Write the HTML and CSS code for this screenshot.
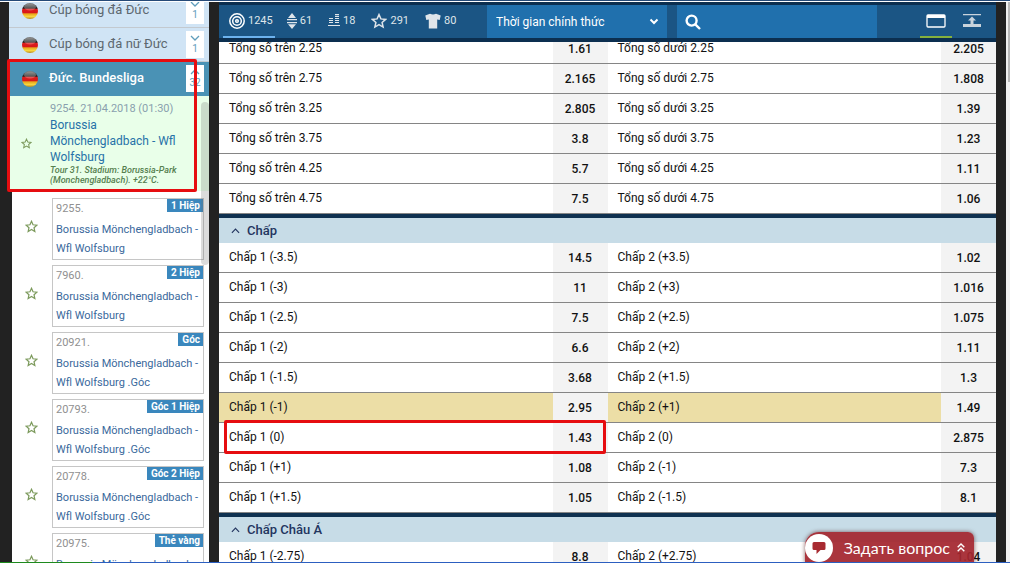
FILE: index.html
```html
<!DOCTYPE html>
<html lang="vi">
<head>
<meta charset="utf-8">
<title>Đức. Bundesliga</title>
<link rel="stylesheet" href="styles.css">
</head>
<body>
<svg class="defs" width="0" height="0" aria-hidden="true">
  <defs>
    <linearGradient id="flag" x1="0" y1="0" x2="0" y2="1">
      <stop offset="0" stop-color="#777"/><stop offset=".3" stop-color="#252525"/><stop offset=".36" stop-color="#6a1512"/>
      <stop offset=".4" stop-color="#dd1c1c"/><stop offset=".6" stop-color="#d81818"/><stop offset=".68" stop-color="#e8a81c"/>
      <stop offset=".85" stop-color="#f8d640"/><stop offset="1" stop-color="#b98a1a"/>
    </linearGradient>
    <symbol id="de" viewBox="0 0 16 16"><circle cx="8" cy="8" r="8" fill="url(#flag)"/><ellipse cx="8" cy="4" rx="6" ry="3.4" fill="#fff" opacity=".25"/></symbol>
    <symbol id="star" viewBox="0 0 16 16"><path d="M8 1.600l1.900 4.300 4.700.5-3.500 3.100 1 4.600L8 11.700l-4.100 2.400 1-4.600L1.400 6.400l4.700-.5z" fill="none" stroke="currentColor" stroke-width="1.500" stroke-linejoin="miter"/></symbol>
    <symbol id="up" viewBox="0 0 10 6"><path d="M1 5l4-4 4 4" fill="none" stroke="currentColor" stroke-width="1.300"/></symbol>
    <symbol id="down" viewBox="0 0 10 6"><path d="M1 1l4 4 4-4" fill="none" stroke="currentColor" stroke-width="1.300"/></symbol>
  </defs>
</svg>
<div class="topline"></div>
<div class="page">
  <aside class="sidebar">
    <div class="league"><svg class="flag"><use href="#de"/></svg><a href="#">Cúp bóng đá Đức</a><button class="toggle"><svg><use href="#down"/></svg>1</button></div>
    <div class="league"><svg class="flag"><use href="#de"/></svg><a href="#">Cúp bóng đá nữ Đức</a><button class="toggle"><svg><use href="#down"/></svg>1</button></div>
    <div class="league open"><svg class="flag"><use href="#de"/></svg><a href="#">Đức. Bundesliga</a><button class="toggle"><svg><use href="#up"/></svg>32</button></div>
    <div class="events">
      <div class="event">
        <button class="fav" aria-label="Yêu thích"><svg><use href="#star"/></svg></button>
        <div class="event-info">
          <div class="date">9254. 21.04.2018 (01:30)</div>
          <a href="#">Borussia Mönchengladbach - Wfl Wolfsburg</a>
          <div class="note">Tour 31. Stadium: Borussia-Park (Monchengladbach). +22°C.</div>
        </div>
      </div>
      <div class="subs">
        <div class="sub"><button class="fav" aria-label="Yêu thích"><svg><use href="#star"/></svg></button><div class="card"><div class="card-top"><span>9255.</span><b>1 Hiệp</b></div><a href="#">Borussia Mönchengladbach - Wfl Wolfsburg</a></div></div>
        <div class="sub"><button class="fav" aria-label="Yêu thích"><svg><use href="#star"/></svg></button><div class="card"><div class="card-top"><span>7960.</span><b>2 Hiệp</b></div><a href="#">Borussia Mönchengladbach - Wfl Wolfsburg</a></div></div>
        <div class="sub"><button class="fav" aria-label="Yêu thích"><svg><use href="#star"/></svg></button><div class="card"><div class="card-top"><span>20921.</span><b>Góc</b></div><a href="#">Borussia Mönchengladbach - Wfl Wolfsburg .Góc</a></div></div>
        <div class="sub"><button class="fav" aria-label="Yêu thích"><svg><use href="#star"/></svg></button><div class="card"><div class="card-top"><span>20793.</span><b>Góc 1 Hiệp</b></div><a href="#">Borussia Mönchengladbach - Wfl Wolfsburg .Góc</a></div></div>
        <div class="sub"><button class="fav" aria-label="Yêu thích"><svg><use href="#star"/></svg></button><div class="card"><div class="card-top"><span>20778.</span><b>Góc 2 Hiệp</b></div><a href="#">Borussia Mönchengladbach - Wfl Wolfsburg .Góc</a></div></div>
        <div class="sub"><button class="fav" aria-label="Yêu thích"><svg><use href="#star"/></svg></button><div class="card"><div class="card-top"><span>20975.</span><b>Thẻ vàng</b></div><a href="#">Borussia Mönchengladbach - Wfl Wolfsburg</a></div></div>
      </div>
      <div class="side-thumb"></div>
    </div>
  </aside>

  <main class="main">
    <header class="bar">
      <nav class="tabs">
        <button class="tab active"><svg width="16" height="16" viewBox="0 0 16 16" fill="none" stroke="#fff" stroke-width="1.500"><circle cx="8" cy="8" r="7.200"/><circle cx="8" cy="8" r="4.300"/><circle cx="8" cy="8" r="1.300"/></svg>1245</button>
        <button class="tab"><svg width="10" height="16" viewBox="0 0 10 16" fill="#dfe5ea"><path d="M5 0l4 5H1zM0 6h10v1.300H0zM0 9h10v1.300H0zM1 11.300h8l-4 4.700z"/></svg>61</button>
        <button class="tab"><svg width="12" height="13" viewBox="0 0 12 13" stroke="#dfe5ea" stroke-width="1.200"><path d="M1 4.500h4M1 6.500h4M1 8.500h4M7 .6h4M7 2.500h4M7 4.500h4M7 6.500h4M7 8.500h4M0 11.500h12"/></svg>18</button>
        <button class="tab"><svg width="16" height="16"><use href="#star"/></svg>291</button>
        <button class="tab"><svg width="16" height="16" viewBox="0 0 16 16" fill="#dfe5ea"><path d="M5 .8q3 1.400 6 0l4.700 1.700-1 4.500-2.500-.5v9H3.800v-9L1.300 7l-1-4.500z"/></svg>80</button>
      </nav>
      <div class="period"><select aria-label="Thời gian"><option>Thời gian chính thức</option></select><svg width="10" height="7" viewBox="0 0 10 7"><path d="M1.500 1.500L5 5l3.500-3.500" fill="none" stroke="#fff" stroke-width="2"/></svg></div>
      <label class="search"><svg width="16" height="16" viewBox="0 0 16 16" fill="none" stroke="#fff" stroke-width="2.400"><circle cx="6.600" cy="6.600" r="5"/><path d="M10.300 10.300l4.700 4.700"/></svg><input type="search" aria-label="Tìm kiếm"></label>
      <div class="views">
        <button class="view active" aria-label="Cửa sổ"><svg width="20" height="14" viewBox="0 0 20 14"><rect x="1" y="1" width="18" height="12" rx="1" fill="none" stroke="#fff" stroke-width="1.300"/><path d="M1 2.500h18" stroke="#fff" stroke-width="3"/></svg></button>
        <button class="view" aria-label="Lên đầu"><svg width="18" height="14" viewBox="0 0 18 14" fill="#c9d3dc"><path d="M0 0h18v1.300H0zM9 2.500l4 4h-2.500V10H18v3H0v-3h7.500V6.500H5z"/></svg></button>
      </div>
    </header>

    <div class="markets">
      <section class="market cut">
        <table>
          <tr><th>Tổng số trên 2.25</th><td>1.61</td><th>Tổng số dưới 2.25</th><td>2.205</td></tr>
          <tr><th>Tổng số trên 2.75</th><td>2.165</td><th>Tổng số dưới 2.75</th><td>1.808</td></tr>
          <tr><th>Tổng số trên 3.25</th><td>2.805</td><th>Tổng số dưới 3.25</th><td>1.39</td></tr>
          <tr><th>Tổng số trên 3.75</th><td>3.8</td><th>Tổng số dưới 3.75</th><td>1.23</td></tr>
          <tr><th>Tổng số trên 4.25</th><td>5.7</td><th>Tổng số dưới 4.25</th><td>1.11</td></tr>
          <tr><th>Tổng số trên 4.75</th><td>7.5</td><th>Tổng số dưới 4.75</th><td>1.06</td></tr>
        </table>
      </section>
      <section class="market">
        <button class="heading"><svg><use href="#up"/></svg>Chấp</button>
        <table>
          <tr><th>Chấp 1 (-3.5)</th><td>14.5</td><th>Chấp 2 (+3.5)</th><td>1.02</td></tr>
          <tr><th>Chấp 1 (-3)</th><td>11</td><th>Chấp 2 (+3)</th><td>1.016</td></tr>
          <tr><th>Chấp 1 (-2.5)</th><td>7.5</td><th>Chấp 2 (+2.5)</th><td>1.075</td></tr>
          <tr><th>Chấp 1 (-2)</th><td>6.6</td><th>Chấp 2 (+2)</th><td>1.11</td></tr>
          <tr><th>Chấp 1 (-1.5)</th><td>3.68</td><th>Chấp 2 (+1.5)</th><td>1.3</td></tr>
          <tr class="hover"><th>Chấp 1 (-1)</th><td>2.95</td><th>Chấp 2 (+1)</th><td>1.49</td></tr>
          <tr><th>Chấp 1 (0)</th><td>1.43</td><th>Chấp 2 (0)</th><td>2.875</td></tr>
          <tr><th>Chấp 1 (+1)</th><td>1.08</td><th>Chấp 2 (-1)</th><td>7.3</td></tr>
          <tr><th>Chấp 1 (+1.5)</th><td>1.05</td><th>Chấp 2 (-1.5)</th><td>8.1</td></tr>
        </table>
      </section>
      <section class="market">
        <button class="heading"><svg><use href="#up"/></svg>Chấp Châu Á</button>
        <table>
          <tr><th>Chấp 1 (-2.75)</th><td>8.8</td><th>Chấp 2 (+2.75)</th><td>1.04</td></tr>
        </table>
      </section>
    </div>
  </main>
</div>
<div class="scroll"><div class="scroll-thumb"></div></div>
<button class="chat"><span class="bubble"><svg width="14" height="14" viewBox="0 0 14 14" fill="#a82a31"><path d="M2 1h10q1.500 0 1.500 1.500v5Q13.500 9 12 9H8.500l-4 4V9H2Q.500 9 .500 7.500v-5Q.500 1 2 1z"/></svg></span>Задать вопрос<svg width="8" height="9" viewBox="0 0 8 9" fill="none" stroke="#fff" stroke-width="1.400"><path d="M.700 4.300L4 1l3.300 3.300M.700 8.300L4 5l3.300 3.300"/></svg></button>
<div class="mark mark-event"></div>
<div class="mark mark-odd"></div>
<div class="bottomline"></div>
</body>
</html>
```
FILE: styles.css
```css
* { box-sizing: border-box; }
body {
  margin: 0;
  height: 100vh;
  overflow: hidden;
  display: flex;
  flex-direction: column;
  background: #222;
  font-family: Roboto, "Noto Sans", sans-serif;
  font-size: 12px;
  color: #111;
}
button, select, input { font: inherit; color: inherit; border: 0; padding: 0; margin: 0; background: none; }
a { text-decoration: none; color: inherit; }
svg { flex: none; }
.defs { position: absolute; }
.topline { flex: none; height: 2px; background: #254a78; border-bottom: 1px solid #fff; }
.page { flex: 1; min-height: 0; display: flex; gap: 10px; padding: 0 14px 0 9px; overflow: hidden; }

/* Sidebar */
.sidebar { width: 200px; flex: none; overflow: hidden; }
.league {
  height: 34px;
  display: flex;
  align-items: center;
  gap: 11px;
  padding: 0 5px 0 13px;
  border-bottom: 1px solid #c3c9cf;
  background: #d0e4f5;
  color: #5d6870;
  font-size: 13px;
}
.league:first-child { margin-top: -8px; }
.league a { flex: 1; padding-bottom: 2px; }
.league.open { background: #4a92b5; color: #fff; border-bottom-color: #4a92b5; font-weight: 500; }
.flag { width: 16px; height: 16px; }
.toggle {
  width: 18px;
  height: 27px;
  background: #fff;
  color: #5f9dbb;
  font-size: 10px;
  line-height: 12px;
  font-weight: 400;
  display: flex;
  flex-direction: column;
  align-items: center;
  justify-content: center;
  gap: 2px;
}
.toggle svg { width: 10px; height: 6px; }
.events { position: relative; }
.event { display: flex; background: #e9ffe9; padding: 5px 24px 6px 12px; }
.fav { color: #7c9a5c; flex: none; display: flex; align-items: center; }
.event .fav { width: 29px; }
.event .fav svg { width: 11px; height: 11px; }
.event-info { line-height: 16px; }
.date { color: #8a9fae; font-size: 11px; }
.event-info a { display: block; color: #2672a8; }
.note { color: #55804f; font-size: 9px; line-height: 10px; font-weight: 500; font-style: italic; }
.subs { background: #fff; margin-left: 3px; padding: 7px 5px 0 0; }
.sub { display: flex; margin-bottom: 5px; }
.sub .fav { width: 40px; padding-left: 13px; padding-bottom: 6px; }
.sub .fav svg { width: 13px; height: 13px; }
.card { flex: 1; height: 62px; border: 1px solid #c6c6c6; padding: 0 0 0 3px; color: #3a699c; font-size: 11px; line-height: 19px; }
.card a { display: block; }
.card-top { display: flex; justify-content: space-between; align-items: flex-start; height: 21px; color: #909090; }
.card-top b { background: #3a87bd; color: #fff; font-size: 10px; line-height: 13px; padding: 0 3px 0 4px; }
.side-thumb { position: absolute; top: 6px; right: 0; width: 8px; height: 163px; border-radius: 4px; background: rgba(110, 110, 110, .25); }

/* Top bar */
.main { flex: 1; min-width: 0; background: #0f3150; overflow: hidden; display: flex; flex-direction: column; }
.bar { flex: none; position: relative; z-index: 1; display: flex; height: 40px; border: solid #0c2f50; border-width: 3px 0 4px; background: #1b5584; }
.tabs { width: 268px; flex: none; display: flex; gap: 8px; padding-left: 4px; }
.tab { display: flex; align-items: center; gap: 3px; padding: 0 4px; color: #dfe5ea; font-size: 11px; border-bottom: 2px solid transparent; }
.tab.active { padding: 0 2px 0 6px; border-bottom-color: #6cb2ee; }
.period { width: 180px; flex: none; margin-right: 10px; display: flex; align-items: center; padding-right: 8px; background: #2070ad; color: #fff; }
.period select { flex: 1; min-width: 0; height: 31px; appearance: none; padding-left: 9px; }
.search { flex: 0 1 200px; min-width: 0; display: flex; align-items: center; padding-left: 8px; background: #2070ad; color: #fff; }
.search input { flex: 1; min-width: 0; outline: 0; }
.views { margin-left: auto; display: flex; gap: 4px; padding-right: 8px; }
.view { width: 32px; display: flex; align-items: center; justify-content: center; border-bottom: 2px solid transparent; }
.view.active { border-bottom-color: #85b13d; }

/* Markets */
.market { margin-bottom: 4px; }
.market.cut { margin-top: -8px; }
.heading { width: 100%; height: 25px; display: flex; align-items: center; gap: 7px; padding-left: 12px; background: #c7dce7; color: #23355f; font-size: 13px; font-weight: 500; }
.heading svg { width: 9px; height: 6px; }
table { width: 100%; table-layout: fixed; border-collapse: separate; border-spacing: 0; background: #fff; }
th, td { height: 30px; border-bottom: 1px solid #858585; }
th { text-align: left; font-weight: 400; padding: 0 10px 2px; }
td { width: 55px; padding: 1px 0 0; text-align: center; font-weight: 500; background: #f3f3f3; }
.hover th { background: #ecdea6; }

/* Overlays */
.scroll { position: absolute; top: 2px; right: 0; bottom: 0; width: 4px; padding-left: 2px; background: #f1f1f1; }
.scroll-thumb { height: 80px; background: #b9b9b9; }
.chat {
  position: absolute;
  right: 36px;
  bottom: 0;
  height: 31px;
  display: flex;
  align-items: center;
  gap: 7px;
  padding-right: 9px;
  border-radius: 14px 6px 0 0;
  background: rgba(164, 38, 46, .93);
  box-shadow: 0 0 4px rgba(60, 0, 0, .6);
  color: #fff;
  font: 16px Lato, sans-serif;
}
.bubble { width: 28px; height: 28px; margin-right: 4px; border-radius: 50%; background: #fff; display: flex; align-items: center; justify-content: center; }
.mark { position: absolute; border: 3px solid #e60d10; border-radius: 2px; }
.mark-event { left: 7px; top: 59px; width: 190px; height: 133px; }
.mark-odd { left: 224px; top: 420px; width: 382px; height: 34px; }
.bottomline { position: absolute; left: 0; right: 0; bottom: 0; height: 1px; background: linear-gradient(90deg, #1e8a1e 92px, #2c5fc0 92px); }
```
